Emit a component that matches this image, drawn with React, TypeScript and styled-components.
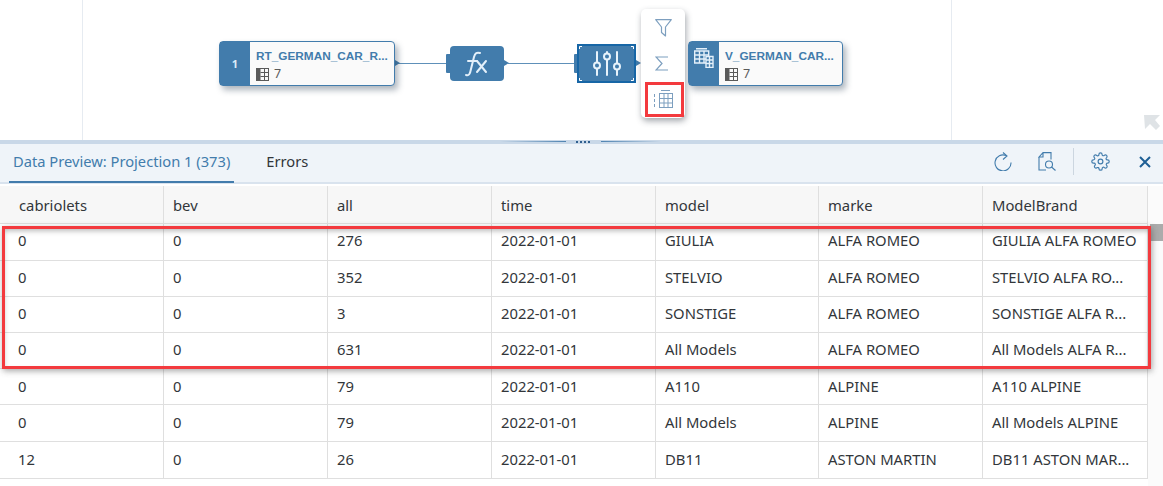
import React from "react";
import styled, { createGlobalStyle } from "styled-components";

const Global = createGlobalStyle`
  html, body { margin: 0; padding: 0; background: #fff; }
  body { font-family: "Noto Sans", "Liberation Sans", sans-serif; }
  #root { width: 1163px; height: 486px; overflow: hidden; }
`;

const Page = styled.div`
  width: 1163px;
  height: 486px;
  display: flex;
  flex-direction: column;
  position: relative;
  overflow: hidden;
`;

const Canvas = styled.section`
  height: 140px;
  flex: none;
  position: relative;
  background: #fff;
`;

const GuideLine = styled.div<{ $x: number }>`
  position: absolute;
  top: 0;
  bottom: 0;
  left: ${(p) => p.$x}px;
  width: 1px;
  background: #e6ebf1;
`;

const Wire = styled.div<{ $x: number; $w: number }>`
  position: absolute;
  top: 63px;
  left: ${(p) => p.$x}px;
  width: ${(p) => p.$w}px;
  height: 1px;
  background: #5e90b9;
`;

const Port = styled.div<{ $x: number }>`
  position: absolute;
  top: 60px;
  left: ${(p) => p.$x}px;
  width: 0;
  height: 0;
  border-top: 3.5px solid transparent;
  border-bottom: 3.5px solid transparent;
  border-left: 5px solid #427cac;
`;

const InPort = styled.div<{ $x: number }>`
  position: absolute;
  top: 54px;
  left: ${(p) => p.$x}px;
  width: 4px;
  height: 19px;
  background: #427cac;
  border-radius: 1px 0 0 1px;
`;

const Node = styled.div<{ $x: number; $w: number }>`
  position: absolute;
  left: ${(p) => p.$x}px;
  top: 41px;
  width: ${(p) => p.$w}px;
  height: 45px;
  box-sizing: border-box;
  display: flex;
  background: #fafafa;
  border: 1px solid #427cac;
  border-radius: 4px;
  box-shadow: 3px 4px 6px rgba(50, 70, 90, 0.4);
`;

const NodeBadge = styled.div<{ $iconTop?: boolean }>`
  width: 30px;
  flex: none;
  background: #427cac;
  color: #dcecf8;
  font-size: 11px;
  font-weight: 700;
  display: flex;
  align-items: ${(p) => (p.$iconTop ? "flex-start" : "center")};
  padding-top: ${(p) => (p.$iconTop ? 6 : 0)}px;
  box-sizing: border-box;
  justify-content: center;
`;

const NodeBody = styled.div`
  padding: 7px 0 0 6px;
  min-width: 0;
  display: flex;
  flex-direction: column;
  gap: 4px;
`;

const NodeTitle = styled.div`
  font-family: "Liberation Sans", sans-serif;
  font-size: 11.8px;
  line-height: 14px;
  font-weight: 700;
  color: #427cac;
  white-space: nowrap;
`;

const NodeMeta = styled.div`
  display: flex;
  align-items: center;
  gap: 5px;
  font-size: 12.5px;
  line-height: 14px;
  color: #5a5a5a;
`;

const OpNode = styled.div<{ $x: number; $y: number; $w: number; $h: number; $selected?: boolean }>`
  position: absolute;
  left: ${(p) => p.$x}px;
  top: ${(p) => p.$y}px;
  width: ${(p) => p.$w}px;
  height: ${(p) => p.$h}px;
  box-sizing: border-box;
  background: #427cac;
  border-radius: ${(p) => (p.$selected ? 0 : 4)}px;
  border: ${(p) => (p.$selected ? "2px solid #1766a6" : "none")};
  display: flex;
  align-items: center;
  justify-content: center;
`;

/* The small white L-shaped marks in the corners of the selected node */
const SelectionCorners = styled.svg`
  position: absolute;
  inset: 0;
`;

const Popover = styled.div`
  position: absolute;
  left: 641px;
  top: 9px;
  width: 44px;
  height: 109px;
  background: #fff;
  border-radius: 5px;
  box-shadow: 1px 3px 6px rgba(50, 60, 70, 0.45);
  display: flex;
  flex-direction: column;
  align-items: center;
  padding-top: 10px;
  box-sizing: border-box;
`;

const MenuIcon = styled.div<{ $h: number; $mb: number; $ml: number }>`
  height: ${(p) => p.$h}px;
  margin-bottom: ${(p) => p.$mb}px;
  margin-left: ${(p) => p.$ml}px;
  display: flex;
`;

const CanvasHighlight = styled.div`
  position: absolute;
  left: 645px;
  top: 82px;
  width: 39px;
  height: 35px;
  box-sizing: border-box;
  border: 3px solid #f33a3e;
`;

const Splitter = styled.div`
  height: 4px;
  flex: none;
  background: #c9d8e8;
  position: relative;
`;

const SplitLine = styled.div<{ $x: number; $w: number; $dir: string }>`
  position: absolute;
  left: ${(p) => p.$x}px;
  width: ${(p) => p.$w}px;
  top: 1px;
  height: 1px;
  background: linear-gradient(${(p) => p.$dir}, #c9d8e8, #4f83b1);
`;

const Grip = styled.div`
  position: absolute;
  left: 576px;
  top: 1px;
  width: 16px;
  height: 2px;
  background: repeating-linear-gradient(90deg, #2f5f8f 0 2px, transparent 2px 4px);
`;

const Toolbar = styled.header`
  height: 40px;
  flex: none;
  box-sizing: border-box;
  background: #eff4f9;
  border-bottom: 2px solid #d9e3ee;
  display: flex;
  align-items: stretch;
  padding-left: 9px;
`;

const Tab = styled.div<{ $active?: boolean }>`
  font-size: 14.7px;
  line-height: 35px;
  height: 39px;
  box-sizing: border-box;
  padding: 0 4px;
  white-space: nowrap;
  color: ${(p) => (p.$active ? "#427cac" : "#32363a")};
  border-bottom: ${(p) => (p.$active ? "2px solid #427cac" : "none")};
  margin-right: ${(p) => (p.$active ? 28 : 0)}px;
`;

const ToolIcons = styled.div`
  margin-left: auto;
  display: flex;
  align-items: center;
  padding-right: 12px;
  padding-bottom: 3px;
`;

const ToolButton = styled.div<{ $mr: number }>`
  display: flex;
  margin-right: ${(p) => p.$mr}px;
`;

const ToolDivider = styled.div`
  width: 1px;
  height: 27px;
  background: #ccd6e0;
  margin-right: 17px;
`;

const TableArea = styled.main`
  flex: 1;
  margin-top: 2px;
  display: flex;
  position: relative;
`;

const Rows = styled.div`
  width: 1148px;
  flex: none;
`;

const Row = styled.div<{ $h: number; $head?: boolean }>`
  display: grid;
  grid-template-columns: 164px 164px 164px 164px 163px 164px 165px;
  height: ${(p) => p.$h}px;
  box-sizing: border-box;
  background: ${(p) => (p.$head ? "#f7f7f7" : "#fff")};
  border-bottom: 1px solid #dfdfdf;
`;

const Cell = styled.div<{ $head?: boolean; $first?: boolean; $top: number }>`
  box-sizing: border-box;
  border-right: 1px solid #dfdfdf;
  padding-left: ${(p) => (p.$first ? (p.$head ? 19 : 18) : 9)}px;
  padding-top: ${(p) => p.$top}px;
  font-size: 14.8px;
  line-height: 19px;
  color: #32363a;
  white-space: nowrap;
  overflow: hidden;
`;

const Scrollbar = styled.div`
  flex: 1;
  background: #fbfbfb;
  position: relative;
`;

const ScrollThumb = styled.div`
  position: absolute;
  top: 38px;
  left: 2px;
  right: 0;
  height: 17px;
  background: #ababab;
`;

const TableHighlight = styled.div`
  position: absolute;
  left: 2px;
  top: 40px;
  width: 1149px;
  height: 143px;
  box-sizing: border-box;
  border: 3px solid #f33a3e;
  box-shadow: 1px 2px 6px rgba(60, 60, 60, 0.45), inset 0 3px 5px -1px rgba(60, 60, 60, 0.35);
  pointer-events: none;
`;

const ResizeArrow = styled.svg`
  position: absolute;
  left: 1143px;
  top: 114px;
`;

const columns = ["cabriolets", "bev", "all", "time", "model", "marke", "ModelBrand"];
const data = [
  ["0", "0", "276", "2022-01-01", "GIULIA", "ALFA ROMEO", "GIULIA ALFA ROMEO"],
  ["0", "0", "352", "2022-01-01", "STELVIO", "ALFA ROMEO", "STELVIO ALFA RO..."],
  ["0", "0", "3", "2022-01-01", "SONSTIGE", "ALFA ROMEO", "SONSTIGE ALFA R..."],
  ["0", "0", "631", "2022-01-01", "All Models", "ALFA ROMEO", "All Models ALFA R..."],
  ["0", "0", "79", "2022-01-01", "A110", "ALPINE", "A110 ALPINE"],
  ["0", "0", "79", "2022-01-01", "All Models", "ALPINE", "All Models ALPINE"],
  ["12", "0", "26", "2022-01-01", "DB11", "ASTON MARTIN", "DB11 ASTON MAR..."],
];
const rowHeights = [37, 36, 36, 36, 36, 37, 37];

const TableGlyph = () => (
  <svg width="13" height="13" viewBox="0 0 13 13" fill="none">
    <rect x="0" y="0" width="4.500" height="13" fill="#5a5a5a" />
    <rect x="0.5" y="0.5" width="12" height="12" stroke="#5a5a5a" />
    <path d="M4.500 4.500H12.500M4.500 8.500H12.500M8.500 0.5V12.500" stroke="#5a5a5a" />
  </svg>
);

export default function App() {
  return (
    <Page>
      <Global />
      <Canvas>
        <GuideLine $x={82} />
        <GuideLine $x={951} />
        <Wire $x={396} $w={54} />
        <Wire $x={508} $w={70} />
        <Wire $x={641} $w={6} />
        <Port $x={395} />
        <Port $x={504} />
        <Port $x={636} />
        <InPort $x={446} />
        <InPort $x={574} />
        <Node $x={219} $w={176}>
          <NodeBadge>1</NodeBadge>
          <NodeBody>
            <NodeTitle>RT_GERMAN_CAR_R...</NodeTitle>
            <NodeMeta><TableGlyph />7</NodeMeta>
          </NodeBody>
        </Node>
        <OpNode $x={450} $y={46} $w={54} $h={35}>
          <svg width="24" height="26" viewBox="0 0 24 26" fill="none" stroke="#e4f0fa" strokeWidth="2" strokeLinecap="round">
            <path d="M1 24c3 1 4 -1 5 -6l3 -12c1 -4 3 -5 6 -4" />
            <path d="M3 10h9" />
            <path d="M12 10l9 11M21 10l-9 11" />
          </svg>
        </OpNode>
        <OpNode $x={577} $y={44} $w={59} $h={39} $selected>
          <SelectionCorners width="55" height="35" viewBox="0 0 55 35" fill="none" stroke="#ffffff" strokeWidth="1">
            <path d="M.5 3V.5H3M52 .5h2.500V3M.5 32v2.500H3M52 34.500h2.500V32" />
          </SelectionCorners>
          <svg width="30" height="25" viewBox="0 0 30 25" fill="none" stroke="#e8f3fb" strokeWidth="2">
            <path d="M5 1v10M5 18v6M15 1v1M15 9v15M25 1v11M25 19v5" strokeLinecap="round" />
            <circle cx="5" cy="14.500" r="3" />
            <circle cx="15" cy="5.500" r="3" />
            <circle cx="25" cy="15.500" r="3" />
          </svg>
        </OpNode>
        <Popover>
          <MenuIcon $h={18} $mb={19} $ml={0}>
            <svg width="17" height="18" viewBox="0 0 17 18" fill="none" stroke="#7d9fbf" strokeWidth="1.2">
              <path d="M.7 .7h15.600l-5.800 7.300v9l-4-3.500v-5.500z" strokeLinejoin="round" />
            </svg>
          </MenuIcon>
          <MenuIcon $h={15} $mb={19} $ml={-3}>
            <svg width="14" height="15" viewBox="0 0 14 15" fill="none" stroke="#7d9fbf" strokeWidth="1.2">
              <path d="M13 1H1l6 6.500-6 6.500h12" />
            </svg>
          </MenuIcon>
          <MenuIcon $h={18} $mb={0} $ml={0}>
            <svg width="19" height="18" viewBox="0 0 19 18" fill="none" stroke="#7d9fbf" strokeWidth="1">
              <path d="M7 .5h9M.5 4v3M.5 9v3M.5 14v3" />
              <rect x="5.500" y="3.500" width="13" height="14" />
              <path d="M5.500 8.500h13M5.500 13h13M10 3.500v14M14 3.500v14" />
            </svg>
          </MenuIcon>
        </Popover>
        <CanvasHighlight />
        <Node $x={688} $w={155}>
          <NodeBadge $iconTop>
            <svg width="20" height="20" viewBox="0 0 20 20" fill="none" stroke="#e4f0fa" strokeWidth="1.4">
              <path d="M2 .7h11M.7 3h14v12H.7z" />
              <path d="M.7 7h14M.7 11h14M5.500 3v12M10 3v12" />
              <path d="M12 8.500h7v11h-7z" fill="#427cac" />
              <path d="M12 12h7M12 15.500h7M15.500 8.500v11" />
            </svg>
          </NodeBadge>
          <NodeBody>
            <NodeTitle>V_GERMAN_CAR...</NodeTitle>
            <NodeMeta><TableGlyph />7</NodeMeta>
          </NodeBody>
        </Node>
        <ResizeArrow width="18" height="17" viewBox="0 0 18 17">
          <path d="M1 1h16l-5 5 5 6-4 4-6-6-5 5z" fill="#dfe3e6" />
        </ResizeArrow>
      </Canvas>
      <Splitter>
        <SplitLine $x={500} $w={66} $dir="90deg" />
        <SplitLine $x={601} $w={60} $dir="270deg" />
        <Grip />
      </Splitter>
      <Toolbar>
        <Tab $active>Data Preview: Projection 1 (373)</Tab>
        <Tab>Errors</Tab>
        <ToolIcons>
          <ToolButton $mr={26}>
            <svg width="18" height="19" viewBox="0 0 18 19" fill="none" stroke="#427cac" strokeWidth="1.1">
              <path d="M12 3.500A8 8 0 1 0 17 10.500" />
              <path d="M9 .5l4 3.500-4 3.500" />
            </svg>
          </ToolButton>
          <ToolButton $mr={17}>
            <svg width="18" height="19" viewBox="0 0 18 19" fill="none" stroke="#427cac" strokeWidth="1.1">
              <path d="M5 .6h8v7M1 5l4-4.400V5zM1 5v13h7" />
              <circle cx="11" cy="12.500" r="3.500" />
              <path d="M13.500 15l4 3.500" />
            </svg>
          </ToolButton>
          <ToolDivider />
          <ToolButton $mr={29}>
            <svg width="19" height="19" viewBox="0 0 24 24" fill="none" stroke="#427cac" strokeWidth="1.5">
              <path d="M12 15a3 3 0 1 0 0-6 3 3 0 0 0 0 6z" />
              <path d="M19.400 15a1.650 1.650 0 0 0 .33 1.820l.06.06a2 2 0 1 1-2.830 2.830l-.06-.06a1.650 1.650 0 0 0-2.800 1.170V21a2 2 0 1 1-4 0v-.09A1.650 1.650 0 0 0 7.800 19.700l-.06.06a2 2 0 1 1-2.830-2.830l.06-.06A1.650 1.650 0 0 0 3.800 14H3a2 2 0 1 1 0-4h.09A1.650 1.650 0 0 0 4.300 7.200l-.06-.06a2 2 0 1 1 2.830-2.830l.06.06A1.650 1.650 0 0 0 10 3.090V3a2 2 0 1 1 4 0v.09a1.650 1.650 0 0 0 2.800 1.170l.06-.06a2 2 0 1 1 2.830 2.830l-.06.06A1.650 1.650 0 0 0 20.910 10H21a2 2 0 1 1 0 4h-.09a1.650 1.650 0 0 0-1.510 1z" />
            </svg>
          </ToolButton>
          <ToolButton $mr={0}>
            <svg width="12" height="12" viewBox="0 0 12 12" fill="none" stroke="#1f5f95" strokeWidth="2">
              <path d="M1 1l10 10M11 1L1 11" />
            </svg>
          </ToolButton>
        </ToolIcons>
      </Toolbar>
      <TableArea>
        <Rows>
          <Row $h={38} $head>
            {columns.map((c, j) => <Cell key={c} $head $first={j === 0} $top={10}>{c}</Cell>)}
          </Row>
          {data.map((row, i) => (
            <Row key={i} $h={rowHeights[i]}>
              {row.map((v, j) => <Cell key={j} $first={j === 0} $top={i >= 4 ? 8 : 7}>{v}</Cell>)}
            </Row>
          ))}
        </Rows>
        <Scrollbar><ScrollThumb /></Scrollbar>
        <TableHighlight />
      </TableArea>
    </Page>
  );
}
